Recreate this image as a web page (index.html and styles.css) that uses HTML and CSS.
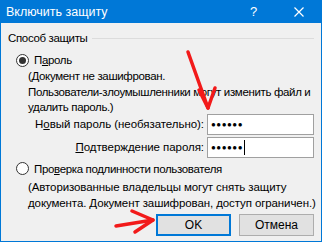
FILE: index.html
```html
<!DOCTYPE html>
<html lang="ru">
<head>
    <meta charset="UTF-8">
    <title>Включить защиту</title>
    <link rel="stylesheet" href="styles.css">
</head>
<body>
    <div class="dialog">
        <div class="titlebar">
            <span class="title">Включить защиту</span>
            <span class="help">?</span>
            <svg class="close" width="10" height="10" viewBox="0 0 10 10">
                <path d="M0.5 0.5 L9.5 9.5 M9.5 0.5 L0.5 9.5" stroke="#fff" stroke-width="1.2" fill="none"/>
            </svg>
        </div>
        <div class="content">
            <div class="legend">Способ защиты</div>
            <div class="radio-row">
                <span class="radio checked"></span>
                <span>П<u>а</u>роль</span>
            </div>
            <p class="note">(Документ не зашифрован.<br>Пользователи-злоумышленники могут изменить файл и<br>удалить пароль.)</p>
            <div class="fields">
                <span class="field-label">Н<u>о</u>вый пароль (необязательно):</span>
                <div class="input">●●●●●●</div>
                <span class="field-label"><u>П</u>одтверждение пароля:</span>
                <div class="input">●●●●●●<span class="caret"></span></div>
            </div>
            <div class="radio-row second">
                <span class="radio"></span>
                <span>Про<u>в</u>ерка подлинности пользователя</span>
            </div>
            <p class="note second">(Авторизованные владельцы могут снять защиту<br>документа. Документ зашифрован, доступ ограничен.)</p>
            <div class="buttons">
                <button class="btn default">OK</button>
                <button class="btn">Отмена</button>
            </div>
        </div>
        <svg class="arrows" width="322" height="242" viewBox="0 0 322 242">
            <g stroke="#f21a1a" stroke-width="3.5" stroke-linecap="round" stroke-linejoin="round" fill="none">
                <path d="M188 52 L208 108"/>
                <path d="M199 90 L208 108 L215 88"/>
                <path d="M116 226 L153 220"/>
                <path d="M132 211 L153 220 L135 232"/>
            </g>
        </svg>
    </div>
</body>
</html>
```

FILE: styles.css
```css
html, body {
    margin: 0;
    padding: 0;
}
body {
    width: 322px;
    height: 242px;
    overflow: hidden;
    font-family: "Liberation Sans", "Noto Sans", sans-serif;
    font-size: 11.5px;
    letter-spacing: -0.35px;
    color: #000;
    background: #f0f0f0;
}
.dialog {
    position: relative;
    box-sizing: border-box;
    width: 322px;
    height: 242px;
    border: 1px solid #0078d7;
    border-top: none;
    background: #f0f0f0;
    display: flex;
    flex-direction: column;
}
.titlebar {
    height: 23px;
    background: #0078d7;
    color: #fff;
    display: flex;
    align-items: center;
    padding-left: 5px;
    flex-shrink: 0;
}
.title {
    flex: 1;
    font-size: 12.5px;
    letter-spacing: 0;
}
.help {
    font-size: 13px;
    margin-right: 37px;
}
.close {
    margin-right: 17px;
}
.content {
    padding: 0 7px;
    display: flex;
    flex-direction: column;
    white-space: nowrap;
}
.legend {
    display: flex;
    align-items: center;
    gap: 4px;
    height: 16px;
    margin-top: 7px;
}
.legend::after {
    content: "";
    flex: 1;
    height: 1px;
    background: #dcdcdc;
}
.radio-row {
    display: flex;
    align-items: center;
    gap: 5px;
    height: 16px;
    margin-top: 6px;
    padding-left: 8px;
}
.radio-row.second {
    margin-top: 3px;
}
.radio {
    box-sizing: border-box;
    width: 13px;
    height: 13px;
    border: 1px solid #333;
    border-radius: 50%;
    background: #fff;
    display: flex;
    align-items: center;
    justify-content: center;
}
.radio.checked::after {
    content: "";
    width: 7px;
    height: 7px;
    border-radius: 50%;
    background: #333;
}
.note {
    margin: 1px 0 0;
    padding-left: 20px;
    line-height: 15.5px;
}
.note.second {
    margin-top: 2px;
    line-height: 16px;
    letter-spacing: -0.1px;
}
.fields {
    display: grid;
    grid-template-columns: 1fr 107px;
    column-gap: 3px;
    row-gap: 2px;
    margin-top: -2px;
}
.field-label {
    text-align: right;
    line-height: 21px;
    letter-spacing: -0.05px;
}
.input {
    box-sizing: border-box;
    height: 21px;
    border: 1px solid #a0a0a0;
    background: #fff;
    padding-left: 3px;
    font-size: 8px;
    letter-spacing: 0.5px;
    line-height: 19px;
    display: flex;
    align-items: center;
}
.caret {
    width: 1px;
    height: 15px;
    background: #000;
    margin-left: 1px;
}
.buttons {
    display: flex;
    justify-content: flex-end;
    gap: 8px;
    margin-top: 3px;
}
.btn {
    box-sizing: border-box;
    width: 75px;
    height: 22px;
    border: 1px solid #adadad;
    background: #e1e1e1;
    font-family: inherit;
    font-size: 12px;
    color: #000;
    padding: 0;
}
.btn.default {
    border: 2px solid #0078d7;
}
.arrows {
    position: absolute;
    left: -1px;
    top: 0;
    pointer-events: none;
}
```
